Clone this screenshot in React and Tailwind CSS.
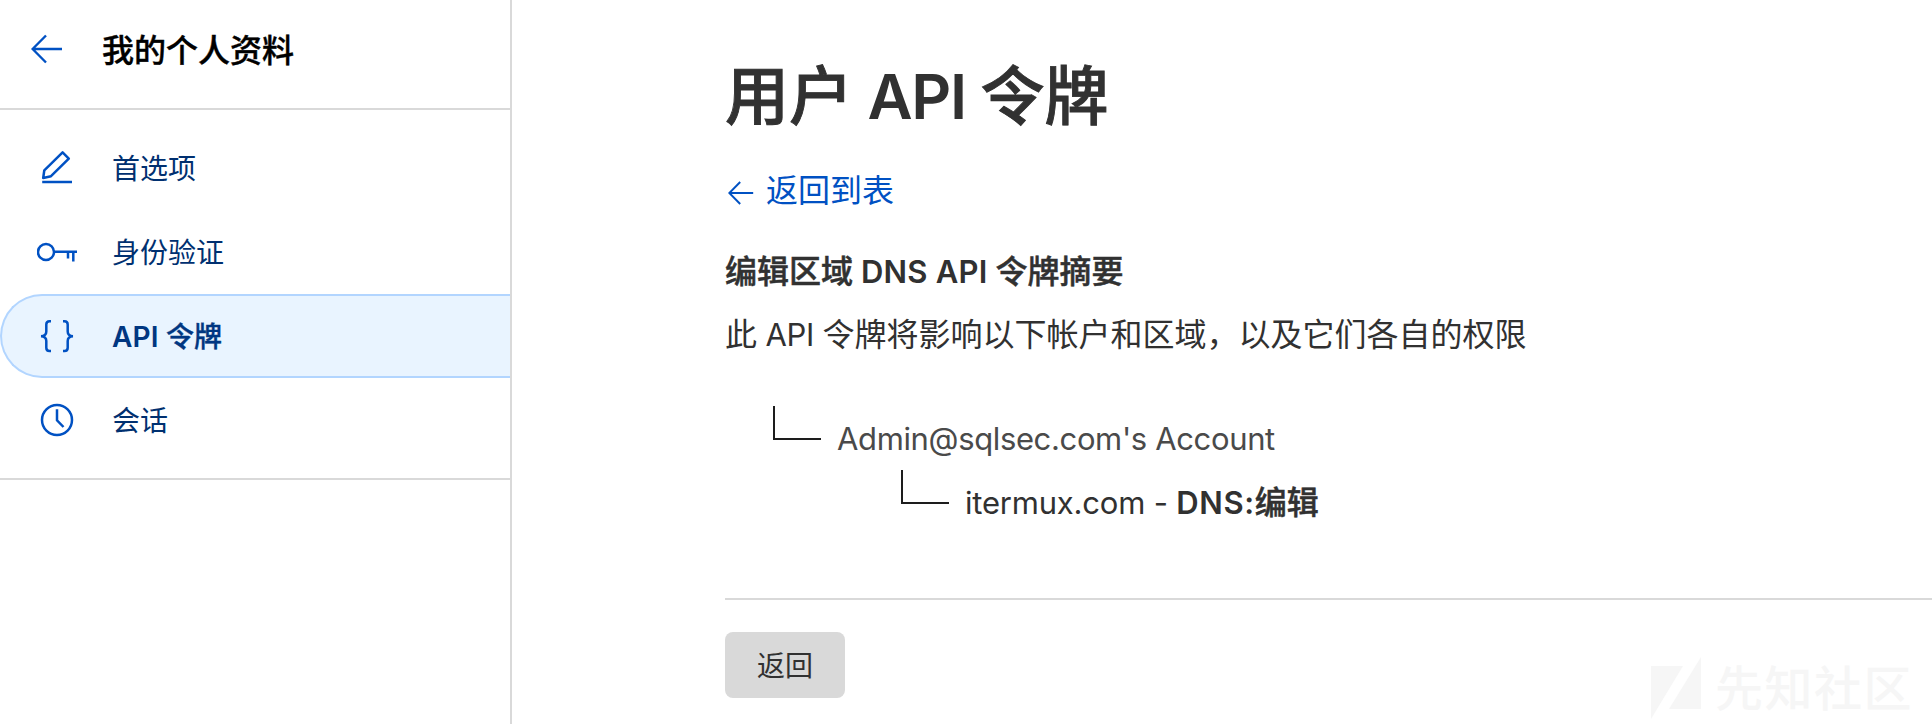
const Latin = ({ children, className = "" }) => (
  <span className={`font-['Inter','Noto_Sans_CJK_SC',sans-serif] leading-none ${className}`}>{children}</span>
);

const BackArrow = ({ className }) => (
  <svg className={className} viewBox="0 0 32 32" fill="none" stroke="currentColor" strokeWidth="2.4">
    <path d="M31 16H2M15 2.500 1.600 16 15 29.500" />
  </svg>
);

const PencilIcon = () => (
  <svg className="h-10 w-10" viewBox="0 0 40 40" fill="none" stroke="currentColor" strokeWidth="2.5" strokeLinejoin="round">
    <path d="M25.600 4.400 31.800 10.600 14 28.200 6.200 30 7.300 22.300Z" />
    <path d="M5.200 34H35" />
  </svg>
);

const KeyIcon = () => (
  <svg className="h-10 w-10" viewBox="0 0 40 40" fill="none" stroke="currentColor" strokeWidth="2.5">
    <circle cx="9" cy="20" r="8" />
    <path d="M17 19.700H40M31 20v6.500M36.300 20v9.500" />
  </svg>
);

const BracesIcon = () => (
  <svg className="h-10 w-10" viewBox="0 0 40 40" fill="none" stroke="currentColor" strokeWidth="2.5">
    <path d="M14 5.200H12.500Q9.300 5.200 9.300 8.500V15.500Q9.300 20 4 20.200Q9.300 20.400 9.300 25V31.800Q9.300 35.100 12.500 35.100H14" />
    <path d="M26 5.200H27.500Q30.700 5.200 30.700 8.500V15.500Q30.700 20 36 20.200Q30.700 20.400 30.700 25V31.800Q30.700 35.100 27.500 35.100H26" />
  </svg>
);

const ClockIcon = () => (
  <svg className="h-10 w-10" viewBox="0 0 40 40" fill="none" stroke="currentColor" strokeWidth="2.5">
    <circle cx="20" cy="20" r="15" />
    <path d="M20 9.200V20.300L26.500 27" />
  </svg>
);

const NavItem = ({ icon, active, children }) => (
  <a
    className={
      active
        ? "flex h-[84px] items-center rounded-l-full border-2 border-r-0 border-[#b2d5ff] bg-[#e9f4ff] pl-[35px] font-medium text-[#003681]"
        : "flex h-[84px] items-center pl-[37px] text-[#003070]"
    }
  >
    <span className="text-[#0051c3]">{icon}</span>
    <span className="pb-0.5 pl-[35px] text-[28px] leading-10">{children}</span>
  </a>
);

const Elbow = () => <span className="-mt-0.5 h-[34px] w-12 shrink-0 border-b-2 border-l-2 border-[#1d1d1d]" />;

export default function App() {
  return (
    <div className="relative flex h-[724px] w-[1932px] overflow-hidden bg-white font-['Noto_Sans_CJK_SC',sans-serif] text-[#313131]">
      <aside className="w-[512px] shrink-0 border-r-2 border-[#d9d9d9]">
        <header className="flex h-[110px] items-center border-b-2 border-[#d9d9d9] pb-2.5 pl-[31px] text-black">
          <BackArrow className="h-8 w-8 text-[#0051c3]" />
          <h2 className="pb-0.5 pl-[39px] text-[32px] leading-10 font-medium [-webkit-text-stroke:0.4px]">我的个人资料</h2>
        </header>
        <nav className="border-b-2 border-[#d9d9d9] py-4">
          <NavItem icon={<PencilIcon />}>首选项</NavItem>
          <NavItem icon={<KeyIcon />}>身份验证</NavItem>
          <NavItem icon={<BracesIcon />} active>
            <Latin className="text-[28px] font-semibold tracking-[0.2px]">API </Latin>
            <span className="[-webkit-text-stroke:0.4px]">令牌</span>
          </NavItem>
          <NavItem icon={<ClockIcon />}>会话</NavItem>
        </nav>
      </aside>

      <main className="flex-1 pt-[51px] pl-[213px]">
        <h1 className="h-20 text-[64px] leading-[80px] font-medium [-webkit-text-stroke:0.9px]">
          用户<Latin className="text-[62px] font-semibold tracking-[-1.2px] [-webkit-text-stroke:0]"> API </Latin>令牌
        </h1>
        <a className="mt-[33px] flex h-12 items-center text-[32px] leading-[48px] text-[#0051c3]">
          <BackArrow className="mt-[9px] ml-[3px] h-[26px] w-[26px]" />
          <span className="pl-3">返回到表</span>
        </a>
        <h3 className="mt-[33px] h-12 text-[32px] leading-[48px] font-medium [-webkit-text-stroke:0.5px]">
          编辑区域<Latin className="text-[31px] font-semibold tracking-[0.2px] [-webkit-text-stroke:0]"> DNS API </Latin>令牌摘要
        </h3>
        <p className="mt-[15px] h-12 text-[32px] leading-[48px]">
          此<Latin className="text-[31px] tracking-[-0.3px]"> API </Latin>令牌将影响以下帐户和区域，以及它们各自的权限
        </p>

        <ul className="mt-[52px]">
          <li className="flex h-16 pl-12">
            <Elbow />
            <span className="pt-1 pl-4 text-[32px] leading-[48px]">
              <Latin className="text-[31px] tracking-[-0.36px] text-[#4a4a4a]">Admin@sqlsec.com's Account</Latin>
            </span>
          </li>
          <li className="flex h-16 pl-[176px]">
            <Elbow />
            <span className="pt-1 pl-4 text-[32px] leading-[48px] font-medium">
              <Latin className="text-[31px] font-normal tracking-[-0.2px]">itermux.com - </Latin>
              <Latin className="text-[31px] font-semibold tracking-[0.6px]">DNS:</Latin>
              <span className="[-webkit-text-stroke:0.5px]">编辑</span>
            </span>
          </li>
        </ul>

        <div className="mt-[62px] border-t-2 border-[#d9d9d9] pt-8">
          <button className="flex h-[66px] w-[120px] items-center justify-center rounded-lg bg-[#d9d9d9] pb-[3px] text-[28px]">返回</button>
        </div>
      </main>

      <div className="absolute top-[656px] left-[1651px] flex items-center text-[#f6f6f6]">
        <svg className="h-[63px] w-[50px]" viewBox="0 0 50 63" fill="currentColor">
          <path d="M0 10H32L0 63ZM50 1V53H18Z" />
        </svg>
        <span className="pb-1 pl-3.5 text-[48px] leading-[59px] font-medium tracking-[1.5px] whitespace-nowrap">先知社区</span>
      </div>
    </div>
  );
}
